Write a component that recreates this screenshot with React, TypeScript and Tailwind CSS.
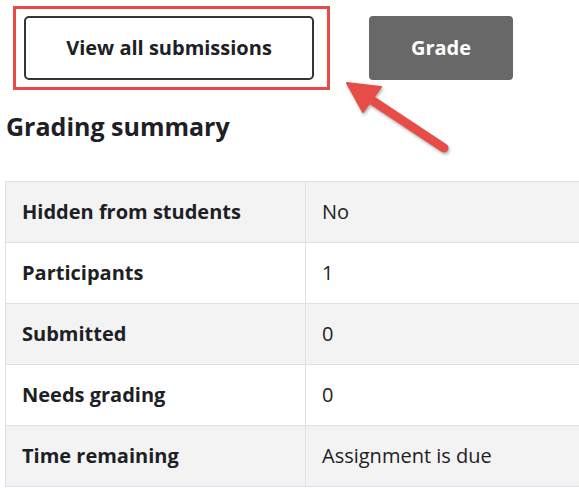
import React from "react";

const rows: [string, string][] = [
  ["Hidden from students", "No"],
  ["Participants", "1"],
  ["Submitted", "0"],
  ["Needs grading", "0"],
  ["Time remaining", "Assignment is due"],
];

export default function App() {
  return (
    <div className="relative w-[579px] h-[488px] overflow-hidden bg-white text-[#1d2125] font-['Open_Sans',sans-serif]">
      <div className="flex items-start pl-[13px] pt-[6px]">
        <div className="border-[3px] border-[#e84c48] pl-[8px] pr-[13px] py-[7px]">
          <button className="w-[290px] h-[64px] rounded-[5px] border-2 border-[#34353a] bg-white text-[20px] font-bold text-[#1d2125]">
            View all submissions
          </button>
        </div>
        <button className="ml-[39px] mt-[10px] w-[144px] h-[64px] rounded-[4px] bg-[#686868] text-[20px] font-bold text-white">
          Grade
        </button>
      </div>

      <h2 className="mt-[21px] pl-[6px] text-[25px] leading-[30px] font-bold text-[#1d2125]">
        Grading summary
      </h2>

      <table className="mt-[40px] ml-[5px] w-[700px] border-collapse text-[20px] leading-[30px]">
        <tbody>
          {rows.map(([k, v], i) => (
            <tr key={k} className={i % 2 === 0 ? "bg-[#f3f3f3]" : "bg-white"}>
              <th className="w-[300px] h-[61px] border border-[#dee2e6] pl-[16px] text-left font-bold align-middle">
                {k}
              </th>
              <td className="h-[61px] border border-[#dee2e6] pl-[16px] text-left font-normal align-middle">
                {v}
              </td>
            </tr>
          ))}
        </tbody>
      </table>

      <svg
        className="absolute left-0 top-0 pointer-events-none"
        width="579"
        height="488"
        viewBox="0 0 579 488"
        style={{ filter: "drop-shadow(1px 2px 1.5px rgba(0,0,0,0.3))" }}
      >
        <line x1="367" y1="97" x2="444" y2="148" stroke="#e84c48" strokeWidth="9" strokeLinecap="round" />
        <polygon points="347,83 381,87 363,112" fill="#e84c48" stroke="#e84c48" strokeWidth="2" strokeLinejoin="round" />
      </svg>
    </div>
  );
}
